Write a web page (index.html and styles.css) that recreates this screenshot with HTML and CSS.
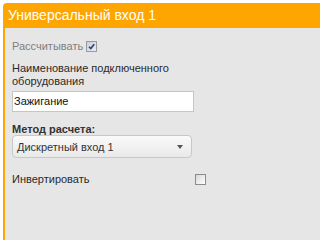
FILE: index.html
```html
<!DOCTYPE html>
<html lang="ru">
<head>
<meta charset="utf-8">
<link rel="stylesheet" href="styles.css">
</head>
<body>
<div class="panel">
  <div class="head">Универсальный вход 1</div>
  <div class="body">
    <div class="row calc">
      <span class="lbl-disabled">Рассчитывать</span>
      <span class="cb cb-checked">
        <svg width="7" height="7" viewBox="0 0 7 7"><path d="M1 3.8 L2.8 5.6 L6.2 1.2" fill="none" stroke="#2f3f78" stroke-width="1.6"/></svg>
      </span>
    </div>
    <div class="field">
      <div class="lbl">Наименование подключенного оборудования</div>
      <div class="input">Зажигание</div>
    </div>
    <div class="field method">
      <div class="lbl bold">Метод расчета:</div>
      <div class="select"><span>Дискретный вход 1</span><span class="arrow"></span></div>
    </div>
    <div class="row invert">
      <span class="lbl">Инвертировать</span>
      <span class="cb"></span>
    </div>
  </div>
</div>
</body>
</html>
```
FILE: styles.css
```css
html, body {
  margin: 0;
  padding: 0;
  background: #ffffff;
  height: 100%;
  overflow: hidden;
}
body {
  font-family: "Liberation Sans", Arial, sans-serif;
  font-size: 11px;
  color: #2a2a2a;
}
.panel {
  margin: 3px 0 0 3px;
  height: calc(100% - 3px);
  display: flex;
  flex-direction: column;
}
.head {
  background: #ffa500;
  color: #ffffff;
  font-size: 14px;
  height: 25px;
  line-height: 25px;
  padding-left: 5px;
  border-top-left-radius: 4px;
}
.body {
  flex: 1;
  background: #e6e6e6;
  border-left: 2px solid #ffa500;
  padding: 11px 0 0 7px;
}
.row {
  display: flex;
  align-items: center;
  line-height: 14px;
}
.lbl-disabled {
  color: #808080;
}
.cb {
  box-sizing: border-box;
  width: 11px;
  height: 11px;
  border: 1px solid #8c8c8c;
  background: linear-gradient(135deg, #d6d6d6 0%, #f4f4f4 70%, #ffffff 100%);
  display: inline-flex;
  align-items: center;
  justify-content: center;
}
.calc .cb {
  margin-left: 3px;
  border-color: #9a9a9a;
  background: linear-gradient(135deg, #c9d0dc 0%, #e8ecf2 100%);
}
.field {
  margin-top: 9px;
}
.lbl {
  line-height: 13px;
  color: #2a2a2a;
  width: 190px;
}
.bold {
  font-weight: bold;
  color: #333333;
}
.input {
  box-sizing: border-box;
  margin-top: 3px;
  width: 182px;
  height: 21px;
  line-height: 19px;
  background: #ffffff;
  border: 1px solid #c6c6c6;
  padding-left: 1px;
  color: #111111;
}
.method {
  margin-top: 11px;
}
.select {
  box-sizing: border-box;
  margin-top: -1px;
  width: 180px;
  height: 23px;
  border: 1px solid #c8c8c8;
  border-radius: 4px;
  background: linear-gradient(#fafafa, #e9e9e9);
  display: flex;
  align-items: center;
  justify-content: space-between;
  padding: 0 8px 0 4px;
  color: #333333;
}
.arrow {
  width: 0;
  height: 0;
  border-left: 3px solid transparent;
  border-right: 3px solid transparent;
  border-top: 4px solid #555555;
  margin-top: 1px;
}
.invert {
  margin-top: 15px;
  width: 194px;
  justify-content: space-between;
  color: #333333;
}
```
